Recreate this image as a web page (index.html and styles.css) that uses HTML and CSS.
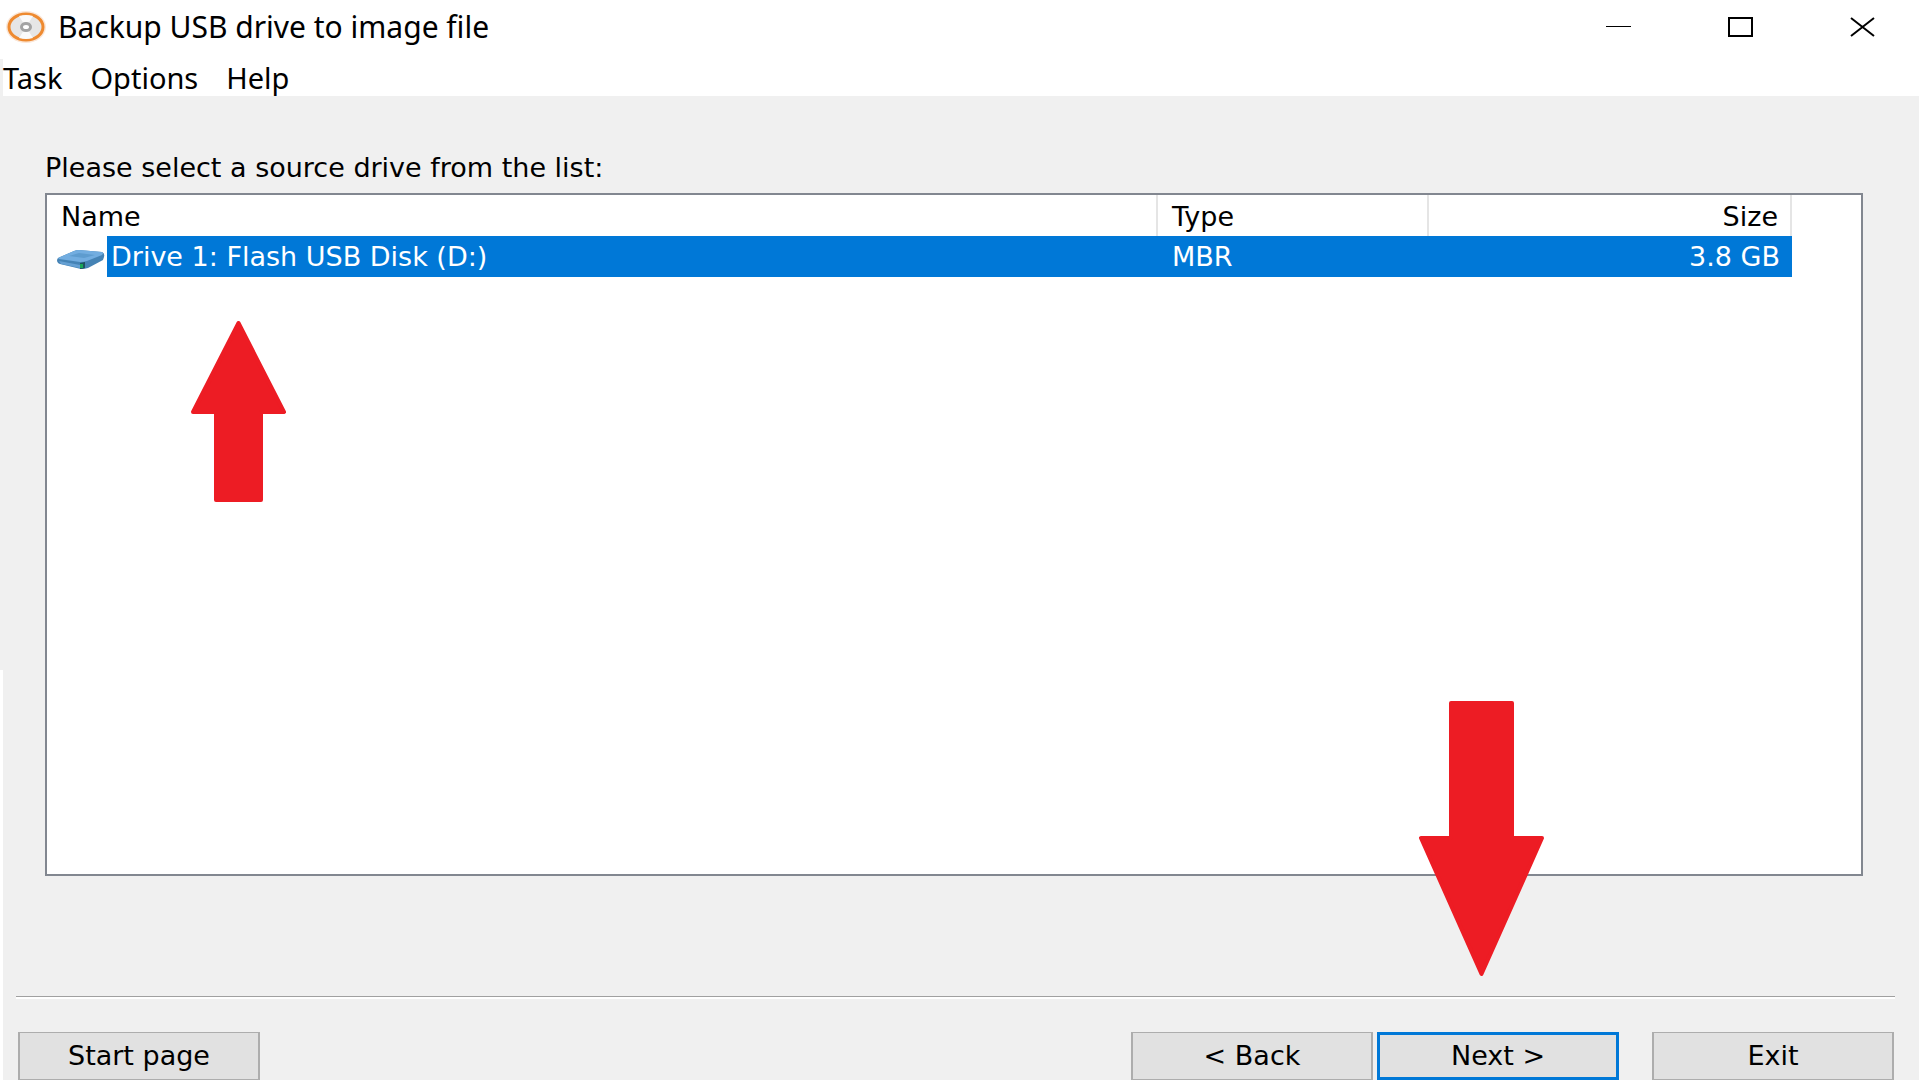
FILE: index.html
```html
<!DOCTYPE html>
<html lang="en">
<head>
    <meta charset="UTF-8">
    <meta name="viewport" content="width=device-width, initial-scale=1.0">
    <title>Backup USB drive to image file</title>
    <link rel="stylesheet" href="styles.css">
</head>
<body>
    <header class="titlebar">
        <svg class="logo" viewBox="0 0 40 32" aria-hidden="true">
            <ellipse cx="20" cy="16" rx="20" ry="16" fill="#fbe6d6"/>
            <ellipse cx="20" cy="16" rx="17" ry="13" fill="#e6e6e6" stroke="#ee8a30" stroke-width="3"/>
            <path d="M20 16L13 5Q20 3 27 5ZM20 16L13 27Q20 29 27 27Z" fill="#fafafa"/>
            <ellipse cx="20" cy="16" rx="4.500" ry="3.500" fill="#fff" stroke="#a3a3a3" stroke-width="3"/>
        </svg>
        <h1>Backup USB drive to image file</h1>
        <div class="window-controls">
            <button type="button" aria-label="Minimize">
                <svg viewBox="0 0 25 20"><path d="M0 9.500H25" stroke-width="1" shape-rendering="crispEdges"/></svg>
            </button>
            <button type="button" aria-label="Maximize">
                <svg viewBox="0 0 25 20"><rect x="1" y="1" width="23" height="18" stroke-width="2" shape-rendering="crispEdges"/></svg>
            </button>
            <button type="button" aria-label="Close">
                <svg viewBox="0 0 25 20"><path d="M1 1L24 19M24 1L1 19" stroke-width="2"/></svg>
            </button>
        </div>
    </header>
    <nav class="menubar">
        <a href="#">Task</a>
        <a href="#">Options</a>
        <a href="#">Help</a>
    </nav>
    <main>
        <p id="list-label">Please select a source drive from the list:</p>
        <div class="drive-list">
            <table aria-labelledby="list-label">
                <colgroup>
                    <col class="col-icon">
                    <col class="col-name">
                    <col class="col-type">
                    <col class="col-size">
                </colgroup>
                <thead>
                    <tr>
                        <th class="name" colspan="2">Name</th>
                        <th>Type</th>
                        <th class="size">Size</th>
                    </tr>
                </thead>
                <tbody>
                    <tr>
                        <td class="icon">
                            <svg class="drive" viewBox="0 0 48 20" aria-hidden="true">
                                <path d="M0 10Q0 8 3 7L17 1Q19 0 22 0L45 2Q48 3 47 7L46 10L31 18Q28 19 24 19L3 14Q0 13 0 10Z" fill="#4583b5"/>
                                <path d="M1 8L17 1Q19 0 22 0L45 2Q47 3 45 5L30 11Q27 12 23 12L2 9Z" fill="#72ade0"/>
                                <path d="M2 11L23 15V18L4 14Z" fill="#65a0d3"/>
                                <path d="M12 6L22 3L38 5L27 8Z" fill="#5e9ccf"/>
                                <path d="M23 13L28 12V18Q26 19 23 19Z" fill="#1d5360"/>
                                <path d="M23 14H26V18H23Z" fill="#18a558"/>
                            </svg>
                        </td>
                        <td class="drive-name">Drive 1: Flash USB Disk (D:)</td>
                        <td>MBR</td>
                        <td class="size">3.8 GB</td>
                    </tr>
                </tbody>
            </table>
        </div>
    </main>
    <footer>
        <button type="button">Start page</button>
        <button type="button" class="back">&lt; Back</button>
        <button type="button" class="next">Next &gt;</button>
        <button type="button" class="exit">Exit</button>
    </footer>

    <svg class="arrow arrow-up" viewBox="0 0 95 181" aria-hidden="true">
        <path d="M47.500 2L93 91H70V179H25V91H2Z"/>
    </svg>
    <svg class="arrow arrow-down" viewBox="0 0 125 275" aria-hidden="true">
        <path d="M32 2H93V137H123L62.500 273L2 137H32Z"/>
    </svg>
</body>
</html>
```

FILE: styles.css
```css
* {
    box-sizing: border-box;
}
body {
    font-family: "DejaVu Sans", Verdana, sans-serif;
    font-size: 27px;
    line-height: 32px;
    color: #000;
    margin: 0;
    height: 100vh;
    overflow: hidden;
    display: flex;
    flex-direction: column;
    background: #f0f0f0 linear-gradient(#fff, #fff) left bottom / 3px 38% no-repeat;
    border-right: 1px solid #fff;
}
button {
    font: inherit;
    color: inherit;
    padding: 0;
}
.titlebar {
    display: flex;
    align-items: center;
    height: 59px;
    padding: 0 0 5px 6px;
    background-color: #fff;
    font-family: "Noto Sans", "Open Sans", sans-serif;
}
.titlebar h1 {
    margin: 0 auto 0 12px;
    font-size: 30px;
    font-weight: normal;
}
.logo {
    width: 40px;
    height: 32px;
}
.window-controls {
    display: flex;
    gap: 8px;
}
.window-controls button {
    width: 114px;
    height: 54px;
    border: none;
    background: none;
}
.window-controls svg {
    display: block;
    width: 25px;
    height: 20px;
    margin: 0 auto;
    fill: none;
    stroke: #000;
}
.menubar {
    display: flex;
    gap: 28px;
    height: 37px;
    padding: 3px 0;
    background-color: #fff;
    border-left: 3px solid #f0f0f0;
    font-family: "Noto Sans", "Open Sans", sans-serif;
    font-size: 29px;
}
.menubar a {
    color: #000;
    text-decoration: none;
}
main {
    flex: 1;
    display: flex;
    flex-direction: column;
    padding: 56px 56px 120px 45px;
}
main p {
    margin: 0;
    padding-bottom: 9px;
}
.drive-list {
    flex: 1;
    background-color: #fff;
    border: 2px solid #828790;
    padding-right: 69px;
}
table {
    width: 100%;
    table-layout: fixed;
    border-collapse: separate;
    border-spacing: 0;
}
.col-icon {
    width: 60px;
}
.col-type {
    width: 271px;
}
.col-size {
    width: 363px;
}
th, td {
    height: 41px;
    padding: 0 12px 0 14px;
    font-weight: normal;
    text-align: left;
}
th {
    padding-top: 3px;
    border-right: 2px solid #e5e5e5;
}
td {
    background-color: #0078d7;
    color: #fff;
}
td.icon {
    padding: 7px 0 0 10px;
    background-color: #fff;
}
td.drive-name {
    padding-left: 4px;
}
.size {
    text-align: right;
}
.drive {
    display: block;
    width: 48px;
    height: 20px;
}
footer {
    display: flex;
    height: 84px;
    margin: 0 24px 0 16px;
    padding: 35px 1px 0 2px;
    border-top: 1px solid #a0a0a0;
    box-shadow: inset 0 2px #fff;
}
footer button {
    width: 242px;
    height: 48px;
    background-color: #e1e1e1;
    border: 2px solid #adadad;
    border-width: 1px 2px;
}
footer .back {
    margin-left: auto;
}
footer .next {
    margin-left: 4px;
    border: 3px solid #0078d7;
}
footer .exit {
    margin-left: 33px;
}
/* pointers drawn over the window */
.arrow {
    position: absolute;
    fill: #ed1c24;
    stroke: #ed1c24;
    stroke-width: 4;
    stroke-linejoin: round;
}
.arrow-up {
    left: 191px;
    top: 321px;
    width: 95px;
    height: 181px;
}
.arrow-down {
    left: 1419px;
    top: 701px;
    width: 125px;
    height: 275px;
}
```
